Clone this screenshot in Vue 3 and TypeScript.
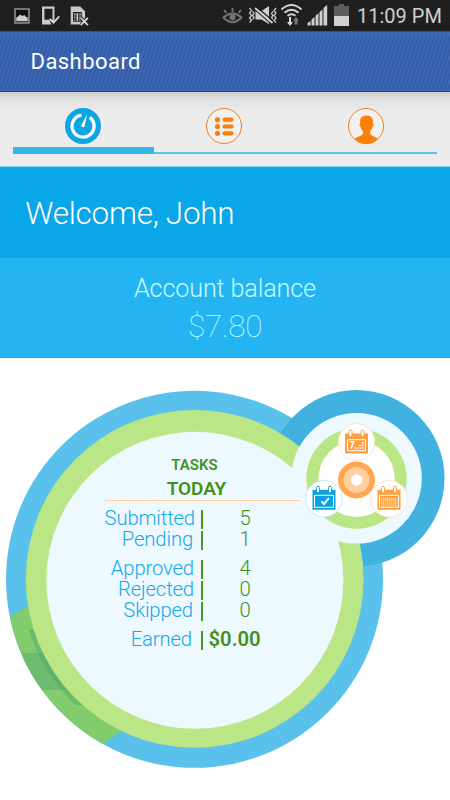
<script setup lang="ts">
interface Row {
  label: string
  value: string
  kind?: string
}

const rows: Row[] = [
  { label: 'Submitted', value: '5', kind: 'first' },
  { label: 'Pending', value: '1' },
  { label: 'Approved', value: '4', kind: 'gap' },
  { label: 'Rejected', value: '0' },
  { label: 'Skipped', value: '0' },
  { label: 'Earned', value: '$0.00', kind: 'earned' },
]
</script>

<template>
  <div class="screen">
    <header class="status">
      <svg class="status-icons" width="225" height="31" viewBox="0 0 225 31">
        <rect x="15.700" y="8.700" width="14.600" height="14.600" fill="#111" stroke="#a5a5a5" stroke-width="1.400" />
        <path d="M17 21.500v-4l2.500-1.500 1.500-1.500 2.500 1.500 2-1 1.500 1.800 2 .7v4z" fill="#ccc" />
        <path fill-rule="evenodd" d="M44 6h13v19H44zM46.500 8.500v11.500H55V8.500z" fill="#cdcdcd" />
        <path d="M51 17.500l5 5.500 7-7v10h-9z" fill="#1f1f1f" />
        <path d="M52 19l4 4 6-6.500" fill="none" stroke="#d8d8d8" stroke-width="1.800" />
        <path d="M74 6h10l5 5v14H74z" fill="#c8c8c8" />
        <path d="M77 12.500h8v9h-8zM77 16h2.500M77 19h2.500M79.500 12.500v9M82.500 12.500v9M82.500 16h3" fill="none" stroke="#222" stroke-width="1.200" />
        <path d="M84.500 18l8 8M92.500 18l-8 8" stroke="#1f1f1f" stroke-width="4" />
        <path d="M84.500 18l7.500 7.500M92 18l-7.500 7.500" stroke="#d5d5d5" stroke-width="1.900" />
      </svg>
      <svg class="status-icons" width="135" height="31" viewBox="215 0 135 31">
        <g fill="none" stroke="#747474" stroke-width="1.900">
          <path d="M223.500 17.500q9-8 18 0q-9 9.500-18 0z" />
          <path d="M232.500 12V8M226.500 13l-2.500-3M238.500 13l2.500-3" />
        </g>
        <circle cx="232.500" cy="17.500" r="3" fill="#747474" />
        <g fill="none" stroke="#c4c4c4" stroke-width="1.300">
          <path d="M249.500 8l2 2.500-2 2.500 2 2.500-2 2.500 2 2.500-2 2M252.500 11.500l1.500 2-1.500 2 1.500 2-1.500 2M276 8l-2 2.500 2 2.500-2 2.500 2 2.500-2 2.500 2 2M273 11.500l-1.500 2 1.500 2-1.500 2 1.500 2" />
        </g>
        <path d="M255.500 11h6l7.500-5v18l-7.500-4.500h-6z" fill="#d0d0d0" />
        <path d="M255 9.700l17.500 15" stroke="#1f1f1f" stroke-width="1.300" />
        <path d="M255.500 6l17 14.500" stroke="#1f1f1f" stroke-width="1.300" />
        <path d="M255 8l17.500 15" stroke="#d0d0d0" stroke-width="1.800" />
        <g fill="none" stroke="#d3d3d3" stroke-width="2">
          <path d="M281.500 9.500q10-9 20 0M284.500 12.700q7-6 14 0M287.500 15.800q4-3 8 0" />
        </g>
        <path d="M289 17h2v5h2l-3 4-3-4h2z" fill="#ddd" />
        <path d="M294.500 24.500v-4h-1.500l3-3.500 3 3.500h-1.500v4z" fill="#777" />
        <path d="M307.500 25.500v-2.500l3-2v4.500zM311.500 25.500v-6l3-2.500v8.500zM315.500 25.500V15.700l3-2.500v12.300zM319.500 25.500V12l3-2.500v16zM323.500 25.500V8l3.700-3v20.500z" fill="#d0d0d0" />
        <path d="M334 6h5V4h5v2h5v10h-15z" fill="#5c5c5c" />
        <path d="M334 16h15v10h-15z" fill="#d0d0d0" />
      </svg>
      <span class="clock">11:09 PM</span>
    </header>

    <div class="appbar">
      <svg class="weave" width="450" height="61">
        <defs>
          <pattern id="hatch" width="4" height="12" patternUnits="userSpaceOnUse">
            <path d="M0 12L4 0M-4 12L0 0M4 12L8 0" stroke="#31579a" stroke-width="1" />
          </pattern>
        </defs>
        <rect width="450" height="61" fill="#3a66b2" />
        <rect y="4" width="450" height="55" fill="url(#hatch)" />
        <rect width="450" height="1" fill="#3b5078" />
        <rect y="60" width="450" height="1" fill="#0a4aa5" />
      </svg>
      <h1>Dashboard</h1>
    </div>

    <nav class="tabs">
      <button class="tab active" aria-label="Overview">
        <svg width="38" height="38" viewBox="0 0 38 38">
          <circle cx="19" cy="19" r="18" fill="#0ba5e6" />
          <path d="M17.500 8.200A11 11 0 1 0 25.800 10.400" fill="none" stroke="#fff" stroke-width="3.300" />
          <path d="M23 7.500L17.200 18.500a2 2 0 0 0 3.300 1.200z" fill="#fff" />
        </svg>
      </button>
      <button class="tab" aria-label="Tasks">
        <svg width="38" height="38" viewBox="0 0 38 38">
          <circle cx="19" cy="19" r="17.500" fill="#f1f1f1" stroke="#ef7d1c" />
          <g fill="#fb7f08">
            <circle cx="12.500" cy="12.700" r="2.600" /><circle cx="12.500" cy="19.500" r="2.600" /><circle cx="12.500" cy="26.300" r="2.600" />
            <rect x="17.500" y="10.600" width="11" height="4.200" rx="1.800" />
            <rect x="17.500" y="17.400" width="11" height="4.200" rx="1.800" />
            <rect x="17.500" y="24.200" width="11" height="4.200" rx="1.800" />
          </g>
        </svg>
      </button>
      <button class="tab" aria-label="Profile">
        <svg width="38" height="38" viewBox="0 0 38 38">
          <circle cx="19" cy="19" r="17.500" fill="#f1f1f1" stroke="#ef7d1c" />
          <path d="M19.500 8.500c5 0 7 3 6.500 8 1.200.5.600 3-.6 3.500-.4 2-1.200 3.200-2.200 4.300v3c2 2 5.300 2.200 7.600 4.700Q26 37 19 37T7.500 32c2.300-2.500 6.500-2.700 8.400-4.700v-3c-1-1.100-1.800-2.300-2.200-4.300-1.200-.5-1.800-3-.6-3.500-.5-5 1.400-8 6.400-8z" fill="#fb7f08" />
        </svg>
      </button>
    </nav>

    <section class="welcome">Welcome, John</section>

    <section class="balance">
      <div class="balance-label">Account balance</div>
      <div class="amount">$7.80</div>
    </section>

    <main class="dial">
      <svg class="rings" width="450" height="442" viewBox="0 358 450 442">
        <defs>
          <clipPath id="disc"><circle cx="194.500" cy="579.300" r="188.500" /></clipPath>
          <clipPath id="shade"><path d="M0 629h120v76H0z" /></clipPath>
          <g id="calendar">
            <path d="M-11.500-8.500h23v20h-23z" />
            <rect x="-7.500" y="-12" width="3" height="6.500" rx="1.500" fill="#fff" stroke="currentColor" />
            <rect x="4.500" y="-12" width="3" height="6.500" rx="1.500" fill="#fff" stroke="currentColor" />
          </g>
        </defs>
        <circle cx="194.500" cy="579.300" r="188.500" fill="#59c1eb" />
        <g clip-path="url(#disc)">
          <path d="M0 621.500L27 607l110 113-34 24-13 20L0 700z" fill="#81cc6c" />
          <path d="M15 653h60v37H15z" fill="#6fbb70" />
          <circle cx="194.700" cy="578.900" r="173.500" fill="#3c9d6c" fill-opacity=".32" clip-path="url(#shade)" />
        </g>
        <circle cx="356.300" cy="478.300" r="88.200" fill="#41b2e0" />
        <circle cx="194.700" cy="578.900" r="168.900" fill="#bbe685" />
        <circle cx="194.900" cy="580.300" r="148.500" fill="#edf9ff" />
        <circle cx="356.500" cy="478.300" r="65.300" fill="#edf9ff" />
        <circle cx="356.500" cy="478.700" r="50.200" fill="#bbe685" />
        <circle cx="356.600" cy="478.700" r="38.200" fill="#fff" />
        <circle cx="356.500" cy="480" r="18.500" fill="#ffa64f" />
        <circle cx="356.500" cy="480" r="13" fill="#ffcfa0" />
        <circle cx="356.500" cy="480" r="5.700" fill="#fff" />

        <circle cx="356.500" cy="442" r="18.300" fill="#fff" stroke="#fbe0c5" stroke-width=".8" />
        <g class="orange" transform="translate(356.500 442)">
          <use href="#calendar" />
          <path d="M-9-2.300H9v11H-9z" fill="none" stroke="#fff" />
          <path d="M-7-.3h4.200L-5.500 6.500" fill="none" stroke="#fff" stroke-width="1.500" />
          <path d="M-2 6h9.500M2.500 3.500h5M5.500 1h2" stroke="#fff" stroke-width="1.700" stroke-dasharray="1.700 .9" />
        </g>
        <circle cx="324" cy="498.700" r="18.300" fill="#fff" stroke="#b9e4f7" stroke-width=".8" />
        <g class="blue" transform="translate(324 498.300)">
          <use href="#calendar" />
          <path d="M-9.500-3H9.500V9H-9.500z" fill="none" stroke="#fff" />
          <path d="M-2.500 3L0 5.700 4.800-.2" fill="none" stroke="#fff" stroke-width="1.900" />
        </g>
        <circle cx="389" cy="498.700" r="18.300" fill="#fff" stroke="#fbe0c5" stroke-width=".8" />
        <g class="orange" transform="translate(389 498.300)">
          <use href="#calendar" />
          <path d="M-9.500-3H9.500V9H-9.500z" fill="none" stroke="#fff" />
          <path d="M-7.500-1v8.500M-5.500-1v8.500M-3.500-1v8.500M-1.500-1v8.500M.5-1v8.500M2.500-1v8.500M4.500-1v8.500M6.500-1v8.500M-8 1H8M-8 3H8M-8 5H8M-8 7H8" stroke="#ffd6aa" stroke-width=".7" />
        </g>
      </svg>

      <div class="summary">
        <div class="tasks">TASKS</div>
        <div class="today">TODAY</div>
        <div class="rule"></div>
        <div v-for="row in rows" :key="row.label" class="row" :class="row.kind">
          <span class="label" :class="row.label.toLowerCase()">{{ row.label }}</span>
          <i class="bar"></i>
          <span class="value">{{ row.value }}</span>
        </div>
      </div>
    </main>
  </div>
</template>

<style>
body { margin: 0; background: #fff; }
</style>

<style scoped>
.screen { width: 450px; height: 800px; overflow: hidden; background: #fff; font-family: Roboto, "Liberation Sans", sans-serif; }
svg { display: block; }
.status { height: 31px; background: #1f1f1f; display: flex; overflow: hidden; }
.status-icons { flex: none; }
.status-icons:first-child { width: 215px; height: 31px; }
.clock { margin-left: 7px; color: #cfcfcf; font-size: 20px; line-height: 32px; white-space: nowrap; }
.appbar { display: grid; height: 61px; }
.weave, h1 { grid-area: 1 / 1; }
h1 { margin: 0; padding-left: 30.5px; font-size: 22px; line-height: 62px; font-weight: 400; color: #fff; letter-spacing: .45px; z-index: 1; }
.tabs { box-sizing: border-box; height: 75px; padding: 15px 13px 0 12.5px; display: grid; grid-template-columns: repeat(3, 1fr); background: linear-gradient(#ccc 0, #dadada 4px, #e5e5e5 12px, #ececec 20px, #ececec 100%); border-bottom: 1px solid #8ed1f0; }
.tab { appearance: none; background: none; border: 0; border-bottom: 2px solid #5fc0e9; height: 47px; padding: 0; display: flex; justify-content: center; align-items: flex-start; }
.tab:nth-child(2) { padding-right: 1px; }
.tab.active { border-bottom: 7px solid #35b6e8; }
.welcome { height: 91px; background: #09a6e8; color: #fff; font-weight: 300; font-size: 31.5px; letter-spacing: -.27px; line-height: 94px; padding-left: 25.3px; }
.balance { box-sizing: border-box; height: 100px; padding-top: 13px; background: #24b4f1; border-bottom: 1px solid #10a8e6; text-align: center; color: #c5fbff; }
.balance-label { font-size: 25.2px; letter-spacing: -.15px; line-height: 35px; font-weight: 300; }
.amount { font-size: 31.5px; letter-spacing: -.3px; line-height: 42px; font-weight: 100; }
.dial { display: grid; }
.rings, .summary { grid-area: 1 / 1; }
.orange { fill: #ff9f40; color: #ff9f40; }
.blue { fill: #0ca1e2; color: #0ca1e2; }
.summary { z-index: 1; width: 195px; padding: 98px 0 0 105px; color: #43911d; }
.tasks, .today { width: 179px; text-align: center; font-weight: 600; }
.tasks { font-size: 15px; line-height: 18px; }
.today { font-size: 19px; height: 26px; line-height: 30px; padding-left: 2px; letter-spacing: -.1px; }
.rule { height: 1px; background: #ffcf9c; margin-bottom: 7px; }
.row { display: grid; grid-template-columns: 90px 6px 2px 97px; height: 21px; align-items: center; font-size: 20.3px; font-weight: 300; line-height: 21px; }
.label { grid-column: 1; text-align: right; color: #15a8ea; white-space: nowrap; justify-self: end; letter-spacing: -.15px; }
.pending, .skipped { margin-right: 2px; }
.approved, .rejected { margin-right: 1px; }
.earned .label { margin-right: 3px; }
.bar { grid-column: 3; width: 2px; height: 19px; margin-top: 1px; background: #46991f; }
.value { grid-column: 4; padding-left: 36.5px; }
.row.gap, .row.earned { margin-top: 8px; }
.earned .value { font-weight: 600; padding-left: 5.5px; }
</style>
